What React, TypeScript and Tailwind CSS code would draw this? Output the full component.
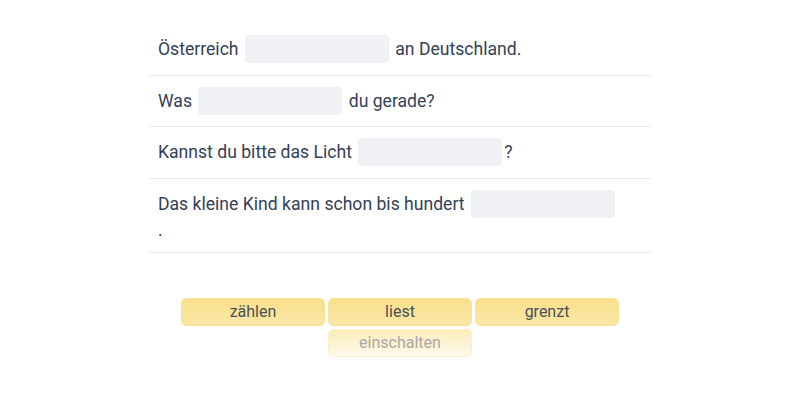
import React from 'react';

type Part = string | null;

const sentences: Part[][] = [
  ['Österreich ', null, ' an Deutschland.'],
  ['Was ', null, ' du gerade?'],
  ['Kannst du bitte das Licht ', null, '?'],
  ['Das kleine Kind kann schon bis hundert ', null, '\n.'],
];

const words = ['zählen', 'liest', 'grenzt'];

function Blank() {
  return <span className="w-[144px] h-[28px] mx-[2px] rounded-[4px] bg-[#f0f1f4]" />;
}

export default function App() {
  return (
    <div className="w-full h-[400px] bg-white" style={{ fontFamily: 'Roboto, "Open Sans", sans-serif' }}>
      <div className="w-[500px] mx-auto pt-[24px]">
        {sentences.map((parts, i) => (
          <div key={i} className="flex flex-wrap items-center px-2 py-[11.25px] border-b border-[#e5e7eb] text-[17.6px] leading-[28px] text-[#334155]">
            {parts.map((p, j) =>
              p === null ? (
                <Blank key={j} />
              ) : p.startsWith('\n') ? (
                <div key={j} className="basis-full leading-[22px] pt-[1px]">{p.slice(1)}</div>
              ) : (
                <span key={j} className="whitespace-pre">{p}</span>
              )
            )}
          </div>
        ))}
      </div>

      <div className="w-[444px] mx-auto mt-[45px] flex flex-wrap justify-center gap-[3px]">
        {words.map((w) => (
          <div
            key={w}
            className="w-[144px] h-[28px] flex items-center justify-center rounded-[5px] border border-[#f9e39b] bg-gradient-to-b from-[#f8df8c] to-[#fae8a6] text-[16px] text-[#4b5056]"
          >
            {w}
          </div>
        ))}
        <div className="w-[144px] h-[28px] flex items-center justify-center rounded-[5px] border border-[#fcf0c8] bg-gradient-to-b from-[#fbecba] to-[#fef9ea] text-[16px] text-[#a8a8a6]">
          einschalten
        </div>
      </div>
    </div>
  );
}
